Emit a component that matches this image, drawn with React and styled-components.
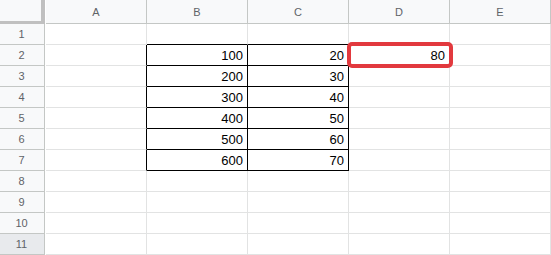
import React from 'react';
import styled, { createGlobalStyle } from 'styled-components';

const GlobalStyle = createGlobalStyle`
  html, body {
    margin: 0;
    padding: 0;
    background: #ffffff;
    overflow: hidden;
  }
  body {
    font-family: "Liberation Sans", Arial, sans-serif;
  }
`

const GRID = '#e2e3e3';
const HEAD_LINE = '#c4c7c5';
const BLACK = '#000000';

const Sheet = styled.div`
  display: grid;
  grid-template-columns: 46px repeat(5, 101px);
  grid-auto-rows: 21px;
  grid-template-rows: 24px;
  width: 551px;
  height: 255px;
  overflow: hidden;
`

const Corner = styled.div`
  background: #f8f9fa;
  border-right: 4px solid #c0c0c0;
  border-bottom: 3px solid #c0c0c0;
  box-sizing: border-box;
  margin-right: 1px;
`

const ColHead = styled.div`
  display: flex;
  align-items: center;
  justify-content: center;
  background: #f8f9fa;
  color: #5f6368;
  font-size: 11px;
  border-right: 1px solid ${HEAD_LINE};
  border-bottom: 1px solid ${HEAD_LINE};
  box-sizing: border-box;
  padding-top: 1px;
`

const RowHead = styled.div`
  display: flex;
  align-items: center;
  justify-content: center;
  background: ${p => (p.$active ? '#e8eaed' : '#f8f9fa')};
  color: #5f6368;
  font-size: 11px;
  border-right: 1px solid ${HEAD_LINE};
  border-bottom: 1px solid ${HEAD_LINE};
  box-sizing: border-box;
  margin-right: 1px;
  padding-right: 1px;
`

const Cell = styled.div`
  position: relative;
  display: flex;
  align-items: center;
  justify-content: flex-end;
  padding-right: 4px;
  font-size: 13px;
  color: #000;
  background: #fff;
  border-right: 1px solid ${p => p.$right};
  border-bottom: 1px solid ${p => p.$bottom};
  box-sizing: border-box;
  z-index: ${p => (p.$selected ? 2 : 'auto')};
`

const Selection = styled.div`
  position: absolute;
  left: -2px;
  top: -3px;
  width: 106px;
  height: 26px;
  border: 4px solid #e2393e;
  border-radius: 5px;
  box-sizing: border-box;
  pointer-events: none;
  z-index: 3;
`

const cols = ['A', 'B', 'C', 'D', 'E'];
const rows = [1, 2, 3, 4, 5, 6, 7, 8, 9, 10, 11];

const values = {
  'B2': 100, 'C2': 20, 'D2': 80,
  'B3': 200, 'C3': 30,
  'B4': 300, 'C4': 40,
  'B5': 400, 'C5': 50,
  'B6': 500, 'C6': 60,
  'B7': 600, 'C7': 70,
};

// bordered block B2:C7
const inBox = (r, c) => r >= 2 && r <= 7 && c >= 1 && c <= 2;

export default function App() {
  return (
    <>
      <GlobalStyle />
      <Sheet>
        <Corner />
        {cols.map(c => <ColHead key={c}>{c}</ColHead>)}
        {rows.map(r => (
          <React.Fragment key={r}>
            <RowHead $active={r === 11}>{r}</RowHead>
            {cols.map((c, ci) => {
              const right = inBox(r, ci) || inBox(r, ci + 1) ? BLACK : GRID;
              const bottom = inBox(r, ci) || inBox(r + 1, ci) ? BLACK : GRID;
              const id = c + r;
              const selected = id === 'D2';
              return (
                <Cell key={id} $right={right} $bottom={bottom} $selected={selected}>
                  {values[id]}
                  {selected && <Selection />}
                </Cell>
              );
            })}
          </React.Fragment>
        ))}
      </Sheet>
    </>
  );
}
